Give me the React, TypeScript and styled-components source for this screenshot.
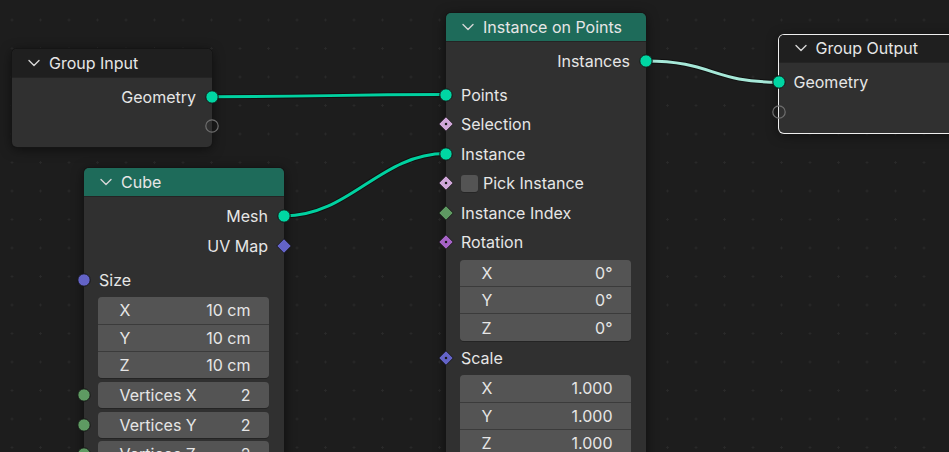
import React from "react";
import styled, { createGlobalStyle } from "styled-components";

// --- global ---

const GlobalStyle = createGlobalStyle`
  html, body {
    margin: 0;
    padding: 0;
    background: #1d1d1d;
  }
  body {
    font-family: Inter, "Noto Sans", "DejaVu Sans", sans-serif;
    -webkit-font-smoothing: antialiased;
  }
`;

// --- canvas & links ---

const Canvas = styled.div`
  position: relative;
  width: 949px;
  height: 452px;
  overflow: hidden;
  background-color: #1d1d1d;
  background-image: radial-gradient(circle, #2a2a2a 0.9px, transparent 1.4px);
  background-size: 28.5px 28.5px;
  background-position: -2.25px 5.75px;
`;

const LinkLayer = styled.svg`
  position: absolute;
  left: 0;
  top: 0;
  width: 949px;
  height: 452px;
  pointer-events: none;
`;

// --- node parts ---

const Node = styled.div<{ $x: number; $y: number; $selected?: boolean }>`
  position: absolute;
  left: ${(p) => p.$x}px;
  top: ${(p) => p.$y}px;
  width: 200px;
  border-radius: 5px;
  background: #303030;
  box-shadow: 0 0 0 1px ${(p) => (p.$selected ? "#eeeeee" : "#151515")},
    0 2px 12px rgba(0, 0, 0, 0.55);
  color: #e6e6e6;
  font-size: 16px;
`;

const Header = styled.div<{ $color: string }>`
  height: 27.5px;
  display: flex;
  align-items: center;
  gap: 9px;
  padding-left: 16px;
  background: ${(p) => p.$color};
  border-radius: 5px 5px 0 0;
  box-shadow: 0 1px 0 rgba(0, 0, 0, 0.25);
  white-space: nowrap;
`;

const Body = styled.div`
  padding: 5.5px 0 6px;
`;

const Row = styled.div<{ $out?: boolean; $gap?: number }>`
  position: relative;
  height: 29.5px;
  margin-top: ${(p) => p.$gap ?? 0}px;
  display: flex;
  align-items: center;
  justify-content: ${(p) => (p.$out ? "flex-end" : "flex-start")};
  gap: 5px;
  padding: 0 16px 0 15px;
  white-space: nowrap;
`;

const SocketSlot = styled.span<{ $side: "left" | "right" }>`
  position: absolute;
  top: 50%;
  ${(p) => p.$side}: -8px;
  width: 16px;
  height: 16px;
  margin-top: -8px;
  display: block;
`;

const CheckBox = styled.span`
  width: 17px;
  height: 17px;
  border-radius: 3px;
  background: #545454;
  box-shadow: 0 1px 0 rgba(0, 0, 0, 0.2);
`;

const VectorBox = styled.div`
  margin: 3px 15px 2px 14px;
  border-radius: 4px;
  overflow: hidden;
  display: flex;
  flex-direction: column;
  gap: 1px;
  background: #3b3b3b;
  box-shadow: 0 1px 0 rgba(0, 0, 0, 0.25);
`;

const VectorRow = styled.div`
  height: 26.33px;
  flex: none;
  display: flex;
  align-items: center;
  justify-content: space-between;
  padding: 0 18.5px 0 21.5px;
  background: #545454;
  white-space: nowrap;
`;

const FieldRow = styled.div`
  position: relative;
  height: 29.5px;
  display: flex;
  align-items: center;
  padding: 0 15px 0 14px;
`;

const Field = styled.div`
  flex: 1;
  height: 26px;
  display: flex;
  align-items: center;
  justify-content: space-between;
  padding: 0 18.5px 0 21.5px;
  background: #545454;
  border-radius: 4px;
  box-shadow: 0 1px 0 rgba(0, 0, 0, 0.25);
  white-space: nowrap;
`;

// --- icons ---

const Chevron = () => (
  <svg width="12" height="8" viewBox="0 0 12 8">
    <path
      d="M1 1.5 L6 6.5 L11 1.5"
      fill="none"
      stroke="#d6d6d6"
      strokeWidth="1.4"
      strokeLinecap="round"
      strokeLinejoin="round"
    />
  </svg>
);

type Shape = "circle" | "hollow" | "diamond" | "field";

const COLORS = {
  geometry: "#00d6a3",
  vector: "#6363c7",
  int: "#5e9a62",
  bool: "#cfa6d8",
  rotation: "#a663c7",
};

const Socket = ({
  side,
  shape,
  color = COLORS.geometry,
}: {
  side: "left" | "right";
  shape: Shape;
  color?: string;
}) => (
  <SocketSlot $side={side}>
    <svg width="16" height="16" viewBox="0 0 16 16">
      {shape === "circle" && (
        <circle cx="8" cy="8" r="6.2" fill={color} stroke="#141414" strokeWidth="1" />
      )}
      {shape === "hollow" && (
        <circle cx="8" cy="8" r="6.2" fill="none" stroke="#6e6e6e" strokeWidth="1.2" />
      )}
      {(shape === "diamond" || shape === "field") && (
        <polygon
          points="8,0.8 15.2,8 8,15.2 0.8,8"
          fill={color}
          stroke="#141414"
          strokeWidth="0.8"
        />
      )}
      {shape === "field" && <rect x="6.9" y="6.9" width="2.2" height="2.2" fill="#1a1a1a" />}
    </svg>
  </SocketSlot>
);

const Vector = ({ values }: { values: [string, string][] }) => (
  <VectorBox>
    {values.map(([k, v]) => (
      <VectorRow key={k}>
        <span>{k}</span>
        <span>{v}</span>
      </VectorRow>
    ))}
  </VectorBox>
);

const Link = ({ d, color }: { d: string; color: string }) => (
  <g>
    <path d={d} fill="none" stroke="#101010" strokeWidth="5" strokeLinecap="round" />
    <path d={d} fill="none" stroke={color} strokeWidth="3" strokeLinecap="round" />
  </g>
);

// --- app ---

const App = () => {
  return (
    <Canvas>
      <GlobalStyle />

      <LinkLayer viewBox="0 0 949 452">
        <Link d="M212 96.75 C 329 96.75, 329 94.5, 446 94.5" color="#00d1a0" />
        <Link d="M284 216 C 350 216, 380 153.5, 446 153.5" color="#00d1a0" />
        <Link d="M646 61 C 712 61, 712 82.25, 778.5 82.25" color="#a6e8d8" />
      </LinkLayer>

      {/* Group Input */}
      <Node $x={12} $y={49}>
        <Header $color="#1f1f1f">
          <Chevron />
          <span>Group Input</span>
        </Header>
        <Body>
          <Row $out>
            Geometry
            <Socket side="right" shape="circle" />
          </Row>
          <Row $out>
            <Socket side="right" shape="hollow" />
          </Row>
        </Body>
      </Node>

      {/* Cube */}
      <Node $x={84} $y={168.3}>
        <Header $color="#1e6b5a">
          <Chevron />
          <span>Cube</span>
        </Header>
        <Body>
          <Row $out>
            Mesh
            <Socket side="right" shape="circle" />
          </Row>
          <Row $out>
            UV Map
            <Socket side="right" shape="diamond" color={COLORS.vector} />
          </Row>
          <Row $gap={4.5}>
            <Socket side="left" shape="circle" color={COLORS.vector} />
            Size
          </Row>
          <Vector
            values={[
              ["X", "10 cm"],
              ["Y", "10 cm"],
              ["Z", "10 cm"],
            ]}
          />
          {["Vertices X", "Vertices Y", "Vertices Z"].map((label) => (
            <FieldRow key={label}>
              <Socket side="left" shape="circle" color={COLORS.int} />
              <Field>
                <span>{label}</span>
                <span>2</span>
              </Field>
            </FieldRow>
          ))}
        </Body>
      </Node>

      {/* Instance on Points */}
      <Node $x={446} $y={13.3}>
        <Header $color="#1e6b5a">
          <Chevron />
          <span>Instance on Points</span>
        </Header>
        <Body>
          <Row $out>
            Instances
            <Socket side="right" shape="circle" />
          </Row>
          <Row $gap={4}>
            <Socket side="left" shape="circle" />
            Points
          </Row>
          <Row>
            <Socket side="left" shape="field" color={COLORS.bool} />
            Selection
          </Row>
          <Row>
            <Socket side="left" shape="circle" />
            Instance
          </Row>
          <Row>
            <Socket side="left" shape="field" color={COLORS.bool} />
            <CheckBox />
            Pick Instance
          </Row>
          <Row>
            <Socket side="left" shape="diamond" color={COLORS.int} />
            Instance Index
          </Row>
          <Row>
            <Socket side="left" shape="field" color={COLORS.rotation} />
            Rotation
          </Row>
          <Vector
            values={[
              ["X", "0°"],
              ["Y", "0°"],
              ["Z", "0°"],
            ]}
          />
          <Row>
            <Socket side="left" shape="field" color={COLORS.vector} />
            Scale
          </Row>
          <Vector
            values={[
              ["X", "1.000"],
              ["Y", "1.000"],
              ["Z", "1.000"],
            ]}
          />
        </Body>
      </Node>

      {/* Group Output */}
      <Node $x={778.5} $y={34.5} $selected>
        <Header $color="#1f1f1f">
          <Chevron />
          <span>Group Output</span>
        </Header>
        <Body>
          <Row>
            <Socket side="left" shape="circle" />
            Geometry
          </Row>
          <Row>
            <Socket side="left" shape="hollow" />
          </Row>
        </Body>
      </Node>
    </Canvas>
  );
};

export default App;
